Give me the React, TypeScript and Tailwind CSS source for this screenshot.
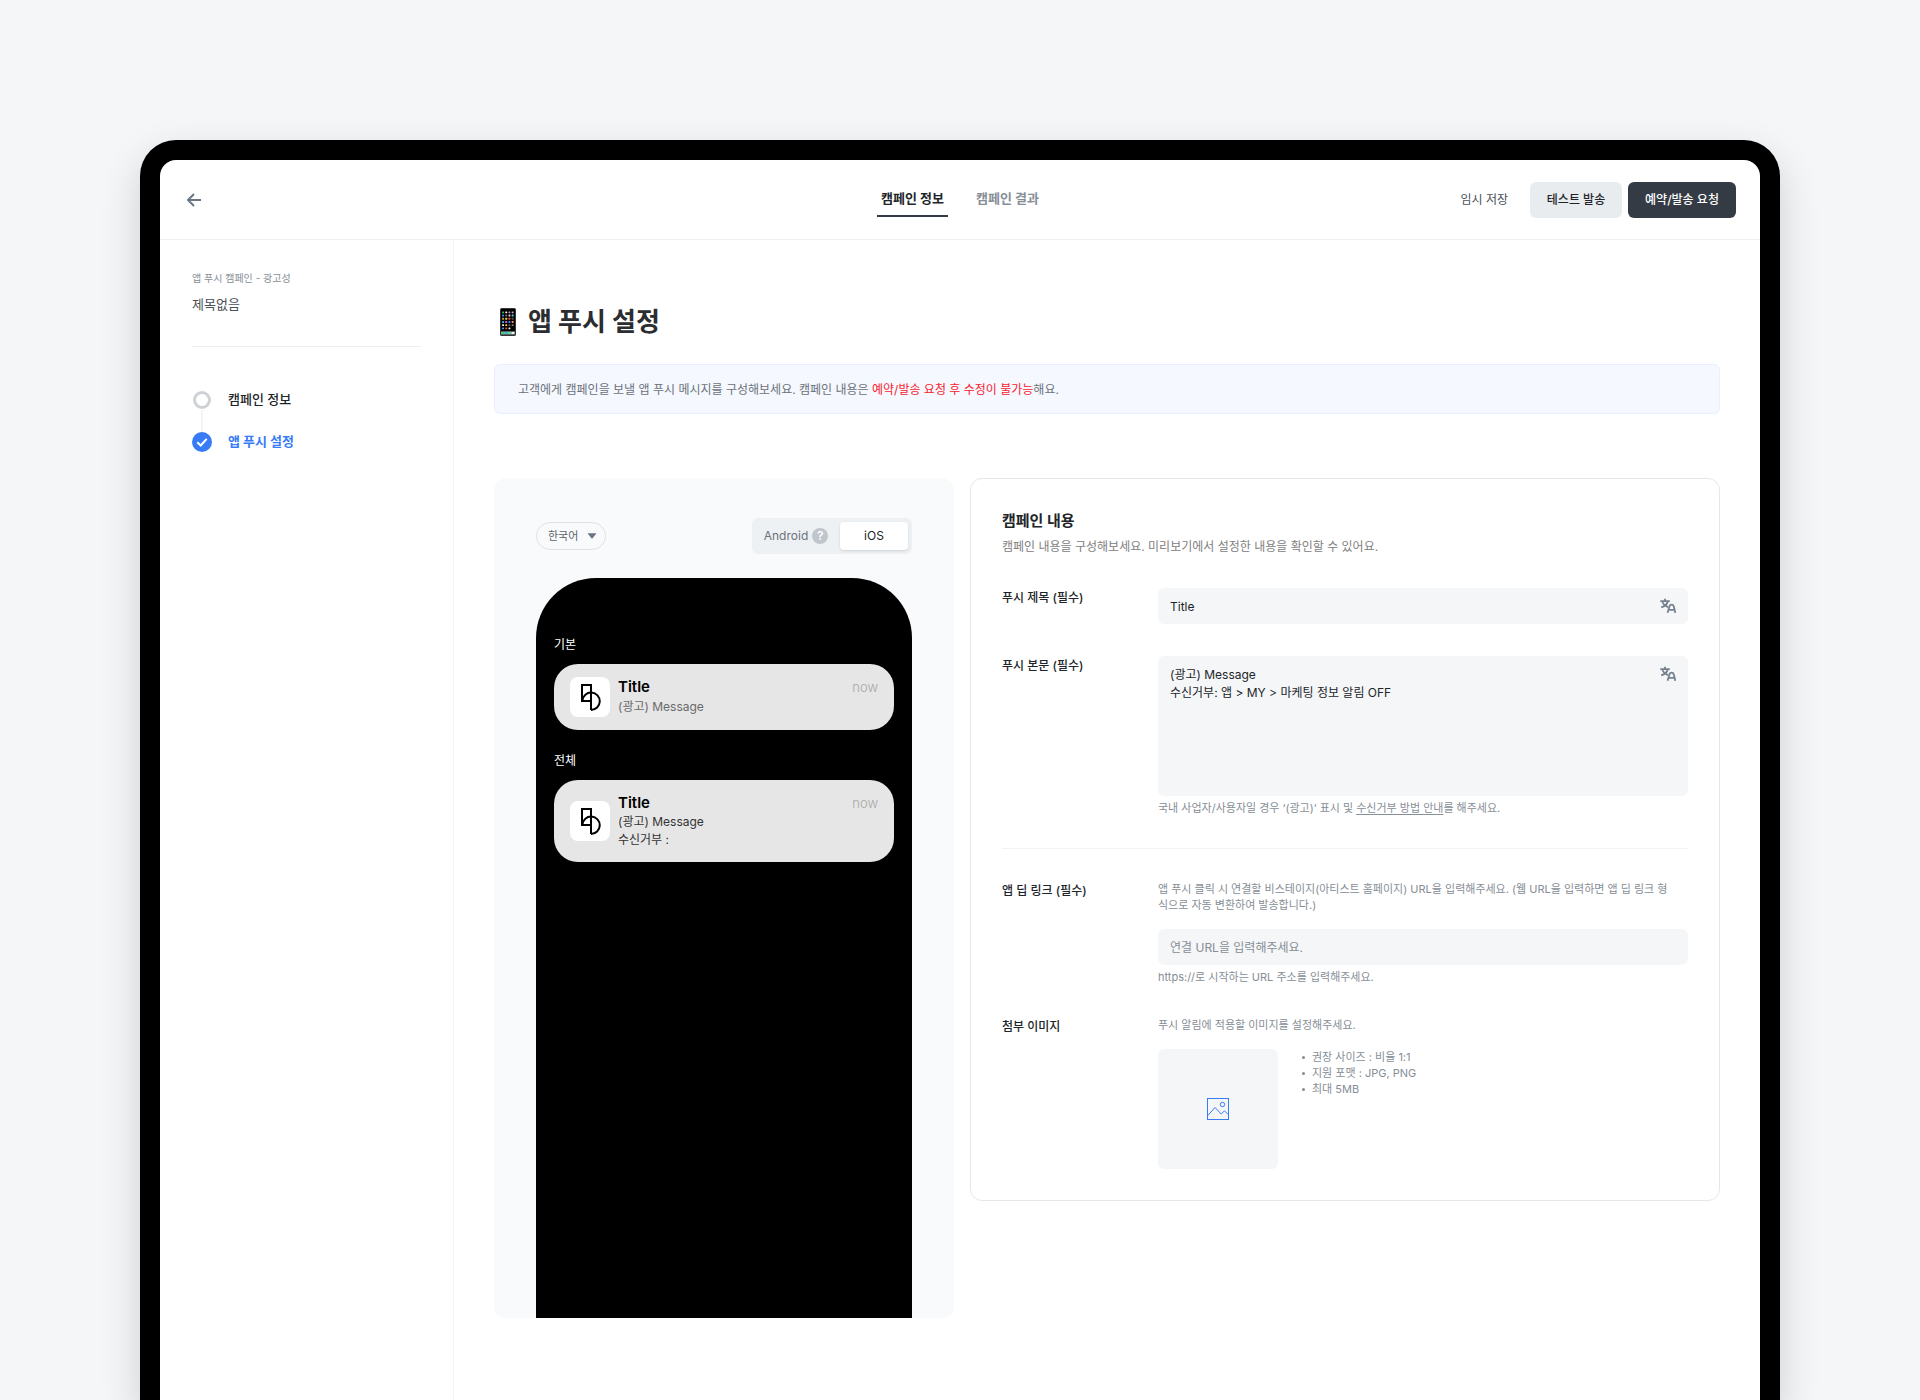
import { useState } from 'react';
import type { ReactNode } from 'react';

const steps = [
  { label: '캠페인 정보', active: false },
  { label: '앱 푸시 설정', active: true },
];

const imageGuides = ['권장 사이즈 : 비율 1:1', '지원 포맷 : JPG, PNG', '최대 5MB'];

const appDots = [
  ['#34c759', '#f2f2f2', '#b98ad0', '#d9a0d0'],
  ['#3f8cff', '#7d6a4a', '#e8d0d8', '#4fd0e8'],
  ['#f0a030', '#e0e060', '#e8503c', '#505050'],
  ['#35b8f0', '#e060d8', '#3f7cff', '#ff9030'],
  ['#f4f4f4', '#ffd83c', '#606060', '#808080'],
  ['#30a8f0', '#ff5040', '#f4f4f4', '#000000'],
];

function PhoneEmoji() {
  return (
    <svg viewBox="0 0 16 28" className="h-7 w-4 shrink-0" aria-hidden="true">
      <rect x="0" y="0" width="16" height="28" rx="1.6" fill="#4a4a4c" />
      <rect x="0.7" y="0.7" width="14.6" height="26.6" rx="1" fill="#000" />
      {appDots.map((row, r) =>
        row.map((color, c) => (
          <rect key={`${r}-${c}`} x={2.1 + c * 3.2} y={3.4 + r * 3.2} width="1.9" height="1.9" rx="0.5" fill={color} />
        ))
      )}
      <rect x="1" y="23.4" width="14" height="3.2" fill="#8fa8a0" />
      {['#3cd060', '#30b8e8', '#58e0a0', '#f4f4f4'].map((color, i) => (
        <rect key={color} x={1.8 + i * 3.3} y="24" width="2.2" height="2" fill={color} />
      ))}
    </svg>
  );
}

function BrandMark() {
  return (
    <div className="flex h-10 w-10 shrink-0 items-center justify-center rounded-lg bg-white">
      <svg viewBox="0 0 40 40" className="h-10 w-10" fill="none" stroke="#000" strokeWidth="2" aria-hidden="true">
        <path d="M21 8H12V24H21Z" />
        <path d="M21 8V33" />
        <path d="M12.4 23.6A8.7 8.7 0 1 1 21 33" />
      </svg>
    </div>
  );
}

function TranslateIcon() {
  return (
    <svg viewBox="0 0 16 16" className="h-4 w-4" fill="none" stroke="#76818e" strokeWidth="1.8" aria-hidden="true">
      <path d="M0.3 3.2H9.8M5 0.8V3.2M2.3 3.2C2.8 5.8 5 8 8.2 9.2M7.8 3.2C7.2 6 5 8.2 1.2 9.4" />
      <path d="M7.6 14.8L9.4 8.4Q9.9 6.7 11.6 6.7Q13.3 6.7 13.8 8.4L15.3 14.8M8.5 11.8H14.5" />
    </svg>
  );
}

interface NotificationProps {
  label: string;
  children: ReactNode;
}

function Notification({ label, children }: NotificationProps) {
  return (
    <section>
      <h3 className="mb-[10px] text-[12px] font-normal leading-[18px] text-white">{label}</h3>
      <div className="flex items-center gap-2 rounded-3xl bg-[#e6e6e6] px-4 py-[13px]">
        <BrandMark />
        <div className="min-w-0 flex-1">
          <div className="flex items-center justify-between">
            <strong className="text-[15px] font-semibold leading-5 text-black">Title</strong>
            <span className="text-[13px] font-light leading-5 text-[#a6a6a6]">now</span>
          </div>
          {children}
        </div>
      </div>
    </section>
  );
}

interface FieldRowProps {
  label: string;
  htmlFor: string;
  children: ReactNode;
}

function FieldRow({ label, htmlFor, children }: FieldRowProps) {
  return (
    <div className="flex">
      <label htmlFor={htmlFor} className="w-[156px] shrink-0 text-[12px] font-medium leading-5 text-[#212529]">
        {label}
      </label>
      <div className="min-w-0 flex-1">{children}</div>
    </div>
  );
}

function Header() {
  return (
    <header className="grid h-20 grid-cols-[1fr_auto_1fr] items-center border-b border-[#eef0f2] px-6">
      <button type="button" aria-label="뒤로" className="flex h-5 w-5 items-center justify-center">
        <svg viewBox="0 0 20 20" className="h-5 w-5" fill="none" stroke="#6c7683" strokeWidth="2" aria-hidden="true">
          <path d="M17 10H4.5M10 4L4 10L10 16" />
        </svg>
      </button>
      <nav className="flex gap-6 text-[13px] font-bold leading-5">
        <a href="#info" className="border-b-2 border-[#343b44] px-1 pt-[6px] pb-[7px] text-[#212529]">
          캠페인 정보
        </a>
        <a href="#result" className="border-b-2 border-transparent px-1 pt-[6px] pb-[7px] text-[#868e96]">
          캠페인 결과
        </a>
      </nav>
      <div className="flex justify-end gap-[6px] text-[12px]">
        <button type="button" className="h-9 px-4 text-[#495057]">
          임시 저장
        </button>
        <button type="button" className="h-9 w-[92px] rounded-md bg-[#e9ecef] font-medium text-[#212529]">
          테스트 발송
        </button>
        <button type="button" className="h-9 w-[108px] rounded-md bg-[#343b44] font-medium text-white">
          예약/발송 요청
        </button>
      </div>
    </header>
  );
}

function Sidebar() {
  return (
    <aside className="w-[294px] shrink-0 border-r border-[#f1f3f5] px-8 pt-[30px]">
      <p className="text-[10px] leading-4 text-[#868e96]">앱 푸시 캠페인 - 광고성</p>
      <p className="mt-2 text-[13px] leading-5 text-[#495057]">제목없음</p>
      <hr className="mt-8 border-[#eef0f2]" />
      <ol className="mt-[43px]">
        {steps.map((step) => (
          <li key={step.label} className="group flex gap-4">
            <div className="flex w-5 flex-col items-center">
              {step.active ? (
                <span className="flex h-5 w-5 items-center justify-center rounded-full bg-[#387bf7]">
                  <svg viewBox="0 0 20 20" className="h-5 w-5" fill="none" stroke="#fff" strokeWidth="2" aria-hidden="true">
                    <path d="M5.3 10.2L8.7 13.5L14.7 6.8" />
                  </svg>
                </span>
              ) : (
                <span className="my-px h-[18px] w-[18px] rounded-full border-3 border-[#ced2d6]" />
              )}
              <span className="h-[22px] w-[2px] bg-[#f3f4f6] group-last:hidden" />
            </div>
            <span
              className={`text-[13px] leading-[18px] ${step.active ? 'font-bold text-[#387bf7]' : 'font-medium text-[#212529]'}`}
            >
              {step.label}
            </span>
          </li>
        ))}
      </ol>
    </aside>
  );
}

function PushPreview() {
  const [os, setOs] = useState('ios');

  return (
    <section className="flex h-[840px] w-[460px] shrink-0 flex-col overflow-hidden rounded-xl bg-[#f9fafc] px-[42px] pt-10">
      <div className="flex items-center justify-between">
        <div className="relative">
          <select
            aria-label="언어"
            className="h-7 w-[70px] appearance-none rounded-full border border-[#dee2e6] bg-transparent pl-[11px] text-[11px] text-[#5c636b]"
          >
            <option>한국어</option>
          </select>
          <svg viewBox="0 0 10 6" className="pointer-events-none absolute top-[11px] right-[9px] h-[6px] w-[10px]" aria-hidden="true">
            <path d="M1.2 0.3H8.8Q9.6 0.4 9 1.1L5.6 5.3Q5 5.8 4.4 5.3L1 1.1Q0.4 0.4 1.2 0.3Z" fill="#6c7683" />
          </svg>
        </div>
        <div className="flex h-9 w-40 items-center gap-1 rounded-md bg-[#eef1f4] p-1 text-[12px]">
          <button
            type="button"
            onClick={() => setOs('android')}
            className={`flex h-7 flex-1 items-center justify-center gap-1 rounded ${os === 'android' ? 'bg-white text-[#212529] shadow-sm' : 'text-[#6b727a]'}`}
          >
            Android
            <span className="flex h-4 w-4 items-center justify-center rounded-full bg-[#c0c6cc] font-semibold text-white">?</span>
          </button>
          <button
            type="button"
            onClick={() => setOs('ios')}
            className={`h-7 w-[68px] rounded ${os === 'ios' ? 'bg-white text-[#212529] shadow-sm' : 'text-[#6b727a]'}`}
          >
            iOS
          </button>
        </div>
      </div>
      <div className="mt-6 flex flex-1 flex-col gap-[22px] rounded-t-[60px] bg-black px-[18px] pt-[58px]">
        <Notification label="기본">
          <p className="truncate text-[12px] leading-5 text-[#6b6b6b]">(광고) Message</p>
        </Notification>
        <Notification label="전체">
          <p className="text-[12px] leading-[18px] text-[#333]">
            (광고) Message
            <br />
            수신거부 :
          </p>
        </Notification>
      </div>
    </section>
  );
}

function CampaignForm() {
  return (
    <section className="min-w-0 flex-1 rounded-xl border border-[#e5e7ea] p-[31px] text-[#212529]">
      <h2 className="text-[15px] font-bold leading-[22px]">캠페인 내용</h2>
      <p className="mt-[6px] text-[12px] leading-[18px] text-[#808080]">
        캠페인 내용을 구성해보세요. 미리보기에서 설정한 내용을 확인할 수 있어요.
      </p>

      <form className="mt-8 flex flex-col gap-8">
        <FieldRow label="푸시 제목 (필수)" htmlFor="push-title">
          <div className="relative">
            <input
              id="push-title"
              defaultValue="Title"
              className="block h-9 w-full rounded-md bg-[#f4f6f8] px-3 text-[12px] text-[#212529]"
            />
            <button type="button" aria-label="제목 번역" className="absolute top-[10px] right-3">
              <TranslateIcon />
            </button>
          </div>
        </FieldRow>
        <FieldRow label="푸시 본문 (필수)" htmlFor="push-body">
          <div className="relative">
            <textarea
              id="push-body"
              defaultValue={'(광고) Message\n수신거부: 앱 > MY > 마케팅 정보 알림 OFF'}
              className="block h-[140px] w-full resize-none rounded-md bg-[#f4f6f8] px-3 py-[10px] text-[12px] leading-[18px] text-[#212529]"
            />
            <button type="button" aria-label="본문 번역" className="absolute top-[10px] right-3">
              <TranslateIcon />
            </button>
          </div>
          <p className="mt-1 text-[11px] leading-4 text-[#868e96]">
            국내 사업자/사용자일 경우 ‘(광고)’ 표시 및{' '}
            <a href="#guide" className="underline underline-offset-2">
              수신거부 방법 안내
            </a>
            를 해주세요.
          </p>
        </FieldRow>

        <hr className="border-[#f1f3f5]" />

        <FieldRow label="앱 딥 링크 (필수)" htmlFor="deep-link">
          <p className="pr-4 text-[11px] leading-4 text-[#868e96]">
            앱 푸시 클릭 시 연결할 비스테이지(아티스트 홈페이지) URL을 입력해주세요. (웹 URL을 입력하면 앱 딥 링크 형식으로 자동 변환하여 발송합니다.)
          </p>
          <input
            id="deep-link"
            placeholder="연결 URL을 입력해주세요."
            className="mt-4 block h-9 w-full rounded-md bg-[#f4f6f8] px-3 text-[12px] placeholder:text-[#868e96]"
          />
          <p className="mt-1 text-[11px] leading-4 text-[#868e96]">https://로 시작하는 URL 주소를 입력해주세요.</p>
        </FieldRow>
        <FieldRow label="첨부 이미지" htmlFor="push-image">
          <p className="text-[11px] leading-4 text-[#868e96]">푸시 알림에 적용할 이미지를 설정해주세요.</p>
          <div className="mt-4 flex gap-6">
            <button
              id="push-image"
              type="button"
              className="flex h-[120px] w-[120px] shrink-0 items-center justify-center rounded-md bg-[#f4f6f8]"
            >
              <svg viewBox="0 0 22 22" className="h-[22px] w-[22px]" fill="none" stroke="#387bf7" aria-hidden="true">
                <rect x="0.5" y="0.5" width="21" height="21" />
                <circle cx="15.5" cy="6.5" r="2.2" />
                <path d="M0.8 17.5L8 9.5L14.2 16L17.5 12.8L21.2 16.5" />
              </svg>
            </button>
            <ul className="text-[11px] leading-4 text-[#868e96]">
              {imageGuides.map((guide) => (
                <li key={guide} className="flex items-center gap-[7px]">
                  <span className="h-[3px] w-[3px] rounded-full bg-[#868e96]" />
                  {guide}
                </li>
              ))}
            </ul>
          </div>
        </FieldRow>
      </form>
    </section>
  );
}

export default function App() {
  return (
    <div className="flex min-h-screen flex-col overflow-hidden bg-[#f4f6f8] px-[140px] pt-[140px] font-['Inter','Noto_Sans_CJK_KR',sans-serif]">
      <div className="flex flex-1 flex-col rounded-t-[36px] bg-black px-5 pt-5 shadow-[0_16px_40px_rgba(0,0,0,0.16)]">
        <div className="flex flex-1 flex-col rounded-t-2xl bg-white">
          <Header />
          <div className="flex flex-1">
            <Sidebar />
            <main className="min-w-0 flex-1 px-10 pt-16 pb-20">
              <div className="flex items-center gap-3 pl-[6px]">
                <PhoneEmoji />
                <h1 className="text-[26px] font-bold leading-9 text-[#2b2d31]">앱 푸시 설정</h1>
              </div>
              <p className="mt-6 rounded-md border border-[#e8effe] bg-[#f5f8ff] px-[23px] pt-4 pb-[14px] text-[12px] leading-[18px] text-[#6b727a]">
                고객에게 캠페인을 보낼 앱 푸시 메시지를 구성해보세요. 캠페인 내용은{' '}
                <span className="text-[#f5222d]">예약/발송 요청 후 수정이 불가능</span>해요.
              </p>
              <div className="mt-16 flex items-start gap-4">
                <PushPreview />
                <CampaignForm />
              </div>
            </main>
          </div>
        </div>
      </div>
    </div>
  );
}
